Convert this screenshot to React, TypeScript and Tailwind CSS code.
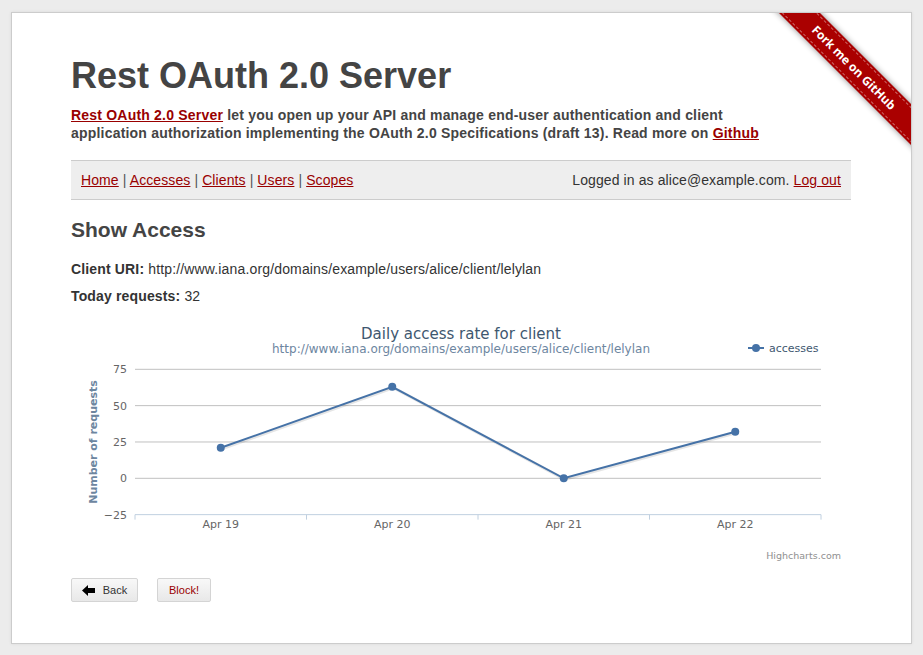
import React from 'react';

const navLinks = ['Home', 'Accesses', 'Clients', 'Users', 'Scopes'];

// chart geometry (px inside the svg)
const plotLeft = 64;
const plotRight = 750;
const zeroY = 164.3;
const stepY = 36.33;
const ticks = [75, 50, 25, 0, -25];
const days = ['Apr 19', 'Apr 20', 'Apr 21', 'Apr 22'];
const values = [21, 63, 0, 32];

const yFor = (v: number) => zeroY - (v / 25) * stepY;
const catW = (plotRight - plotLeft) / days.length;
const xFor = (i: number) => plotLeft + catW * i + catW / 2;

const AccessChart = () => {
  const points = values.map((v, i) => `${xFor(i)},${yFor(v)}`).join(' ');
  const shadow = values.map((v, i) => `${xFor(i) + 1},${yFor(v) + 1}`).join(' ');
  return (
    <svg width="780" height="250" className="block font-['DejaVu_Sans',Verdana,sans-serif]">
      <text x="390" y="25" textAnchor="middle" fill="#3E576F" fontSize="15">
        Daily access rate for client
      </text>
      <text x="390" y="39" textAnchor="middle" fill="#6D869F" fontSize="12">
        http://www.iana.org/domains/example/users/alice/client/lelylan
      </text>

      {/* legend */}
      <line x1="677" y1="34" x2="693" y2="34" stroke="#4572A7" strokeWidth="2" />
      <circle cx="685" cy="34" r="4" fill="#4572A7" />
      <text x="698" y="38" fill="#3E576F" fontSize="11">accesses</text>

      {/* grid + y labels */}
      {ticks.map((t) => (
        <g key={t}>
          {t !== -25 && (
            <line x1={plotLeft} x2={plotRight} y1={yFor(t)} y2={yFor(t)} stroke="#C0C0C0" strokeWidth="1" />
          )}
          <text x="56" y={yFor(t) + 4} textAnchor="end" fill="#666" fontSize="11">
            {t === -25 ? '−25' : t}
          </text>
        </g>
      ))}

      {/* x axis */}
      <line x1={plotLeft} x2={plotRight} y1={yFor(-25)} y2={yFor(-25)} stroke="#C0D0E0" strokeWidth="1" />
      {[0, 1, 2, 3, 4].map((i) => (
        <line
          key={i}
          x1={plotLeft + catW * i}
          x2={plotLeft + catW * i}
          y1={yFor(-25)}
          y2={yFor(-25) + 5}
          stroke="#C0D0E0"
          strokeWidth="1"
        />
      ))}
      {days.map((d, i) => (
        <text key={d} x={xFor(i)} y="214" textAnchor="middle" fill="#666" fontSize="11">
          {d}
        </text>
      ))}

      <text
        x="26"
        y="128"
        textAnchor="middle"
        fill="#6D869F"
        fontSize="11"
        fontWeight="bold"
        transform="rotate(-90 26 128)"
      >
        Number of requests
      </text>

      {/* series */}
      <polyline points={shadow} fill="none" stroke="#000" strokeOpacity="0.1" strokeWidth="3" />
      <polyline points={points} fill="none" stroke="#4572A7" strokeWidth="2" />
      {values.map((v, i) => (
        <circle key={i} cx={xFor(i)} cy={yFor(v)} r="4" fill="#4572A7" />
      ))}

      <text x="770" y="245" textAnchor="end" fill="#909090" fontSize="9.5">
        Highcharts.com
      </text>
    </svg>
  );
};

const ArrowLeft = () => (
  <svg width="13" height="11" viewBox="0 0 13 11" className="mr-2">
    <path d="M0 5.5 L6 0 L6 3 L13 3 L13 8 L6 8 L6 11 Z" fill="#000" />
  </svg>
);

export default function App() {
  return (
    <div className="min-h-[655px] bg-[#ececec] pt-[12px] pl-[11px] font-['Liberation_Sans',Arial,sans-serif]">
      <div className="relative w-[901px] h-[632px] overflow-hidden border border-[#cccccc] bg-white pt-[43px] pl-[59px] pr-[59px] shadow-[0_0_3px_rgba(0,0,0,0.08)]">
        {/* fork ribbon */}
        <div className="absolute left-[732px] top-[40px] w-[220px] rotate-45 bg-[#aa0000] py-[2px] shadow-[0_0_6px_rgba(0,0,0,0.45)]">
          <div className="border-y border-dashed border-white/40 py-[3px] text-center text-[12px] font-bold leading-[17px] text-white font-['Open_Sans',sans-serif]">
            Fork me on GitHub
          </div>
        </div>

        <h1 className="text-[36px] font-bold leading-[40px] text-[#444]">Rest OAuth 2.0 Server</h1>
        <p className="mt-[10px] text-[14px] font-bold leading-[18px] tracking-[0.2px] text-[#444]">
          <a href="#" className="text-[#990000] underline">Rest OAuth 2.0 Server</a> let you open up your API and manage end-user authentication and client
          <br />
          application authorization implementing the OAuth 2.0 Specifications (draft 13). Read more on{' '}
          <a href="#" className="text-[#990000] underline">Github</a>
        </p>

        <div className="mt-[18px] flex w-[780px] items-center justify-between border-y border-[#cccccc] bg-[#eeeeee] px-[10px] py-[9px] text-[14px] leading-5 tracking-[0.1px] text-[#333]">
          <div>
            {navLinks.map((l, i) => (
              <span key={l}>
                {i > 0 && <span className="text-[#555]"> | </span>}
                <a href="#" className="text-[#990000] underline">{l}</a>
              </span>
            ))}
          </div>
          <div>
            Logged in as alice@example.com. <a href="#" className="text-[#990000] underline">Log out</a>
          </div>
        </div>

        <h2 className="mt-[17px] text-[21px] font-bold leading-[26px] text-[#444]">Show Access</h2>
        <p className="mt-[16px] text-[14px] leading-5 tracking-[0.15px] text-[#333]">
          <b>Client URI:</b> http://www.iana.org/domains/example/users/alice/client/lelylan
        </p>
        <p className="mt-[7px] text-[14px] leading-5 tracking-[0.15px] text-[#333]">
          <b>Today requests:</b> 32
        </p>

        <div className="mt-[8px]">
          <AccessChart />
        </div>

        <div className="mt-[14px] flex gap-[19px]">
          <button className="flex h-[24px] w-[67px] items-center justify-center rounded-[2px] border border-[#d4d4d4] bg-gradient-to-b from-[#f8f8f8] to-[#e8e8e8] text-[11px] text-[#333]">
            <ArrowLeft />
            Back
          </button>
          <button className="flex h-[24px] w-[54px] items-center justify-center rounded-[2px] border border-[#d4d4d4] bg-gradient-to-b from-[#f8f8f8] to-[#e8e8e8] text-[11px] text-[#990000]">
            Block!
          </button>
        </div>
      </div>
    </div>
  );
}
